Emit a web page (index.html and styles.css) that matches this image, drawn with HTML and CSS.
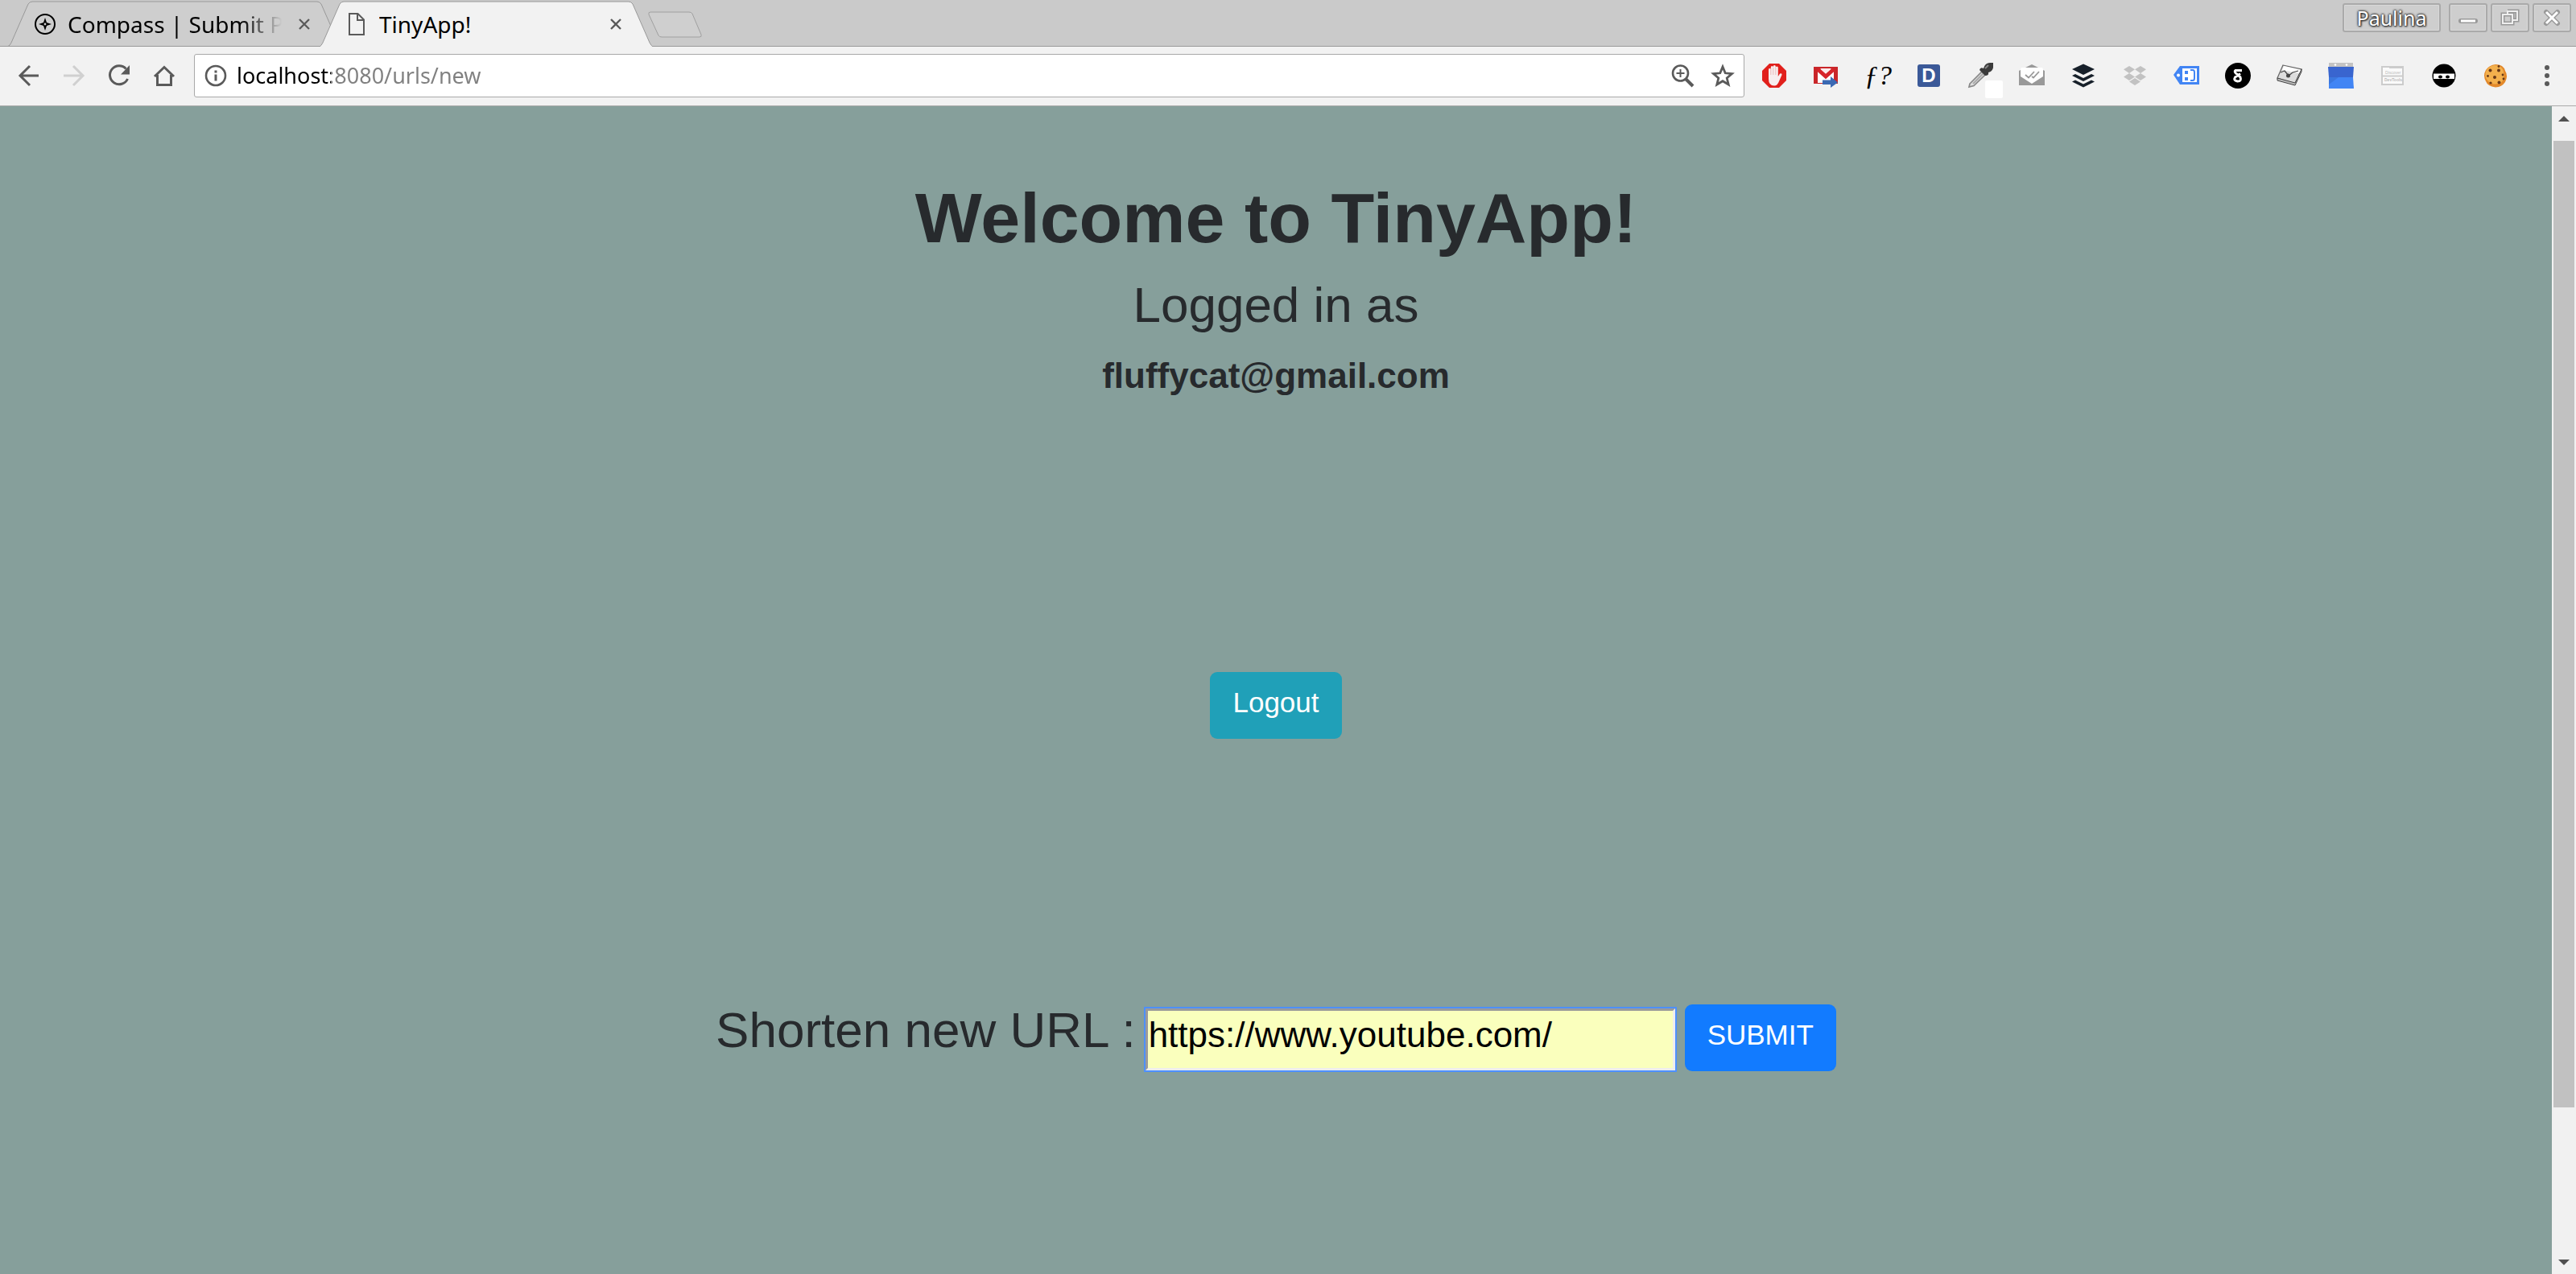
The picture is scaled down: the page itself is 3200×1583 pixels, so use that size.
FILE: index.html
```
<!DOCTYPE html>
<html lang="en">
<head>
<meta charset="utf-8">
<meta name="viewport" content="width=device-width, initial-scale=1">
<title>TinyApp!</title>
<link rel="stylesheet" href="styles.css">
</head>
<body>
<header class="tab-strip">
  <div class="tabs">
    <div class="tab">
      <svg class="tab-shape" viewBox="0 0 414 58" aria-hidden="true"><path d="M0 57.5Q2 57 4 53L25 5Q27 2 30 2H384Q387 2 389 5L410 53Q412 57 414 57.5Z" fill="#cecece" stroke="#999"/></svg>
      <svg class="favicon" viewBox="0 0 26 26" aria-hidden="true"><circle cx="13" cy="13" r="12" fill="none" stroke="#000" stroke-width="2"/><path d="M13 5L15 11L21 13L15 15L13 21L11 15L5 13L11 11Z"/><circle cx="13" cy="13" r="1.4" fill="#ccc"/></svg>
      <span class="tab-title fading">Compass | Submit Project</span>
      <button class="tab-close" aria-label="Close Compass tab"><svg viewBox="0 0 14 14"><path d="M1 1L13 13M13 1L1 13" stroke="#5a5a5a" stroke-width="2.3"/></svg></button>
    </div>
    <div class="tab active">
      <svg class="tab-shape" viewBox="0 0 414 58" aria-hidden="true"><path d="M0 58Q2 57 4 53L25 5Q27 2 30 2H384Q387 2 389 5L410 53Q412 57 414 58" fill="#f2f2f2" stroke="#999"/></svg>
      <svg class="favicon" viewBox="0 0 26 28" aria-hidden="true"><path d="M4 1H14.500L22 8.500V27H4ZM14 1V9H22" fill="none" stroke="#5a5a5a" stroke-width="2"/></svg>
      <span class="tab-title">TinyApp!</span>
      <button class="tab-close" aria-label="Close TinyApp tab"><svg viewBox="0 0 14 14"><path d="M1 1L13 13M13 1L1 13" stroke="#5a5a5a" stroke-width="2.3"/></svg></button>
    </div>
    <button class="new-tab" aria-label="New tab"><svg viewBox="0 0 68 34"><path d="M3 1H51Q54 1 55 3L66 29Q67 32 64 32H17Q14 32 13 30L1 4Q0 1 3 1Z" fill="#cfcfcf" stroke="#a0a0a0"/></svg></button>
  </div>
  <div class="window-controls">
    <button class="win-btn profile">Paulina</button>
    <button class="win-btn" aria-label="Minimize"><svg viewBox="0 0 26 26"><path d="M4 17H22" stroke="#999" stroke-width="6" stroke-linecap="round"/><path d="M4 17H22" stroke="#fff" stroke-width="3"/></svg></button>
    <button class="win-btn" aria-label="Restore"><svg viewBox="0 0 26 26" fill="none"><g stroke="#999" stroke-width="5"><path d="M10 5H22V16H18M4 9H16V20H4Z"/></g><g stroke="#eee" stroke-width="2"><path d="M10 9V5H22V16H17M4 9H16V20H4Z"/></g></svg></button>
    <button class="win-btn" aria-label="Close window"><svg viewBox="0 0 26 26"><path d="M6 6L20 20M20 6L6 20" stroke="#999" stroke-width="6" stroke-linecap="round"/><path d="M6 6L20 20M20 6L6 20" stroke="#fff" stroke-width="3"/></svg></button>
  </div>
</header>

<nav class="toolbar" aria-label="Browser toolbar">
  <div class="nav-buttons">
    <button class="icon-btn" aria-label="Back"><svg viewBox="0 0 32 32"><path d="M28 16H5M17 4L5 16L17 28" fill="none" stroke="#5a5a5a" stroke-width="3"/></svg></button>
    <button class="icon-btn" aria-label="Forward" disabled><svg viewBox="0 0 32 32"><path d="M3 16H27M15 4L27 16L15 28" fill="none" stroke="#d0d0d0" stroke-width="3"/></svg></button>
    <button class="icon-btn" aria-label="Reload"><svg viewBox="0 0 32 32"><path d="M24.500 7.500A11.500 11.500 0 1 0 26.500 20" fill="none" stroke="#5a5a5a" stroke-width="3"/><path d="M29 3V14.500H18Z" fill="#5a5a5a"/></svg></button>
    <button class="icon-btn" aria-label="Home"><svg viewBox="0 0 32 32"><path d="M4 17L16 5.500L28 17M7.500 15V27.500H24.500V15" fill="none" stroke="#5a5a5a" stroke-width="3"/></svg></button>
  </div>
  <div class="omnibox">
    <button class="icon-btn" aria-label="Site information"><svg viewBox="0 0 32 32"><circle cx="16" cy="16" r="12" fill="none" stroke="#5a5a5a" stroke-width="2.600"/><path d="M16 9.500V12.500M16 14.500V22.500" stroke="#5a5a5a" stroke-width="3"/></svg></button>
    <input class="address" type="text" aria-label="Address" value="localhost:8080/urls/new">
    <button class="icon-btn" aria-label="Zoom"><svg viewBox="0 0 32 32"><path d="M20 20L29 29" stroke="#5a5a5a" stroke-width="4"/><circle cx="13.500" cy="13" r="9.500" fill="none" stroke="#5a5a5a" stroke-width="2.600"/><path d="M13.500 8V18M8.500 13H18.500" stroke="#5a5a5a" stroke-width="2"/></svg></button>
    <button class="icon-btn" aria-label="Bookmark"><svg viewBox="0 0 32 32"><path d="M16 5L19.200 12.800L27.500 13.500L21.200 19L23.200 27L16 22.700L8.800 27L10.800 19L4.500 13.500L12.800 12.800Z" fill="none" stroke="#5a5a5a" stroke-width="2.800"/></svg></button>
  </div>
  <div class="extensions">
    <button class="icon-btn" aria-label="Ad blocker"><svg viewBox="0 0 32 32"><path d="M10 1H22L31 10V22L22 31H10L1 22V10Z" fill="#e1201c"/><path d="M9 17V8.500a1.300 1.300 0 0 1 2.800 0V5.500a1.500 1.500 0 0 1 3 0V4.500a1.500 1.500 0 0 1 3 0V6a1.500 1.500 0 0 1 3 0V17L23 13.500Q26 12.500 25.500 15L22 23Q20 28.500 16 28.500Q9 28.500 9 20Z" fill="#f7eeee"/><path d="M11.800 7V15M14.800 6V15M17.800 6V15" stroke="#e8a8a6" stroke-width=".7"/></svg></button>
    <button class="icon-btn" aria-label="Send by Gmail"><svg viewBox="0 0 32 32"><path d="M1 5H31V26H1Z" fill="#c9262a"/><path d="M6 8H26V25H6Z" fill="#fff"/><path d="M6 8L16 17L26 8" fill="none" stroke="#d6242a" stroke-width="5"/><path d="M9 7H23L16 13Z" fill="#fbeaea"/><path d="M12 21.500H22V17L31 24.500L22 31V27H12Z" fill="#3b69b3"/></svg></button>
    <button class="icon-btn font-finder" aria-label="Font finder">ƒ?</button>
    <button class="icon-btn" aria-label="Disconnect"><span class="letter-badge">D</span></button>
    <button class="icon-btn" aria-label="Color picker"><svg viewBox="0 0 32 32"><path d="M3 26L18 11L22 15L8 28.500L2 30Z" fill="#ddd" stroke="#888" stroke-width="1.700"/><path d="M7 26L20 13" stroke="#aaa" stroke-width="2"/><path d="M15 9Q16 5 20 7Q22 0 28 0H32V6Q31 11 26 12Q27 16 22 16Z" fill="#3b3b3b"/><path d="M22 7L26 3" stroke="#888" stroke-width="2"/></svg><span class="swatch"></span></button>
    <button class="icon-btn" aria-label="Mail tracker"><svg viewBox="0 0 32 32"><path d="M0 10L16 2L32 10V28H0Z" fill="#999"/><path d="M2 8Q2 6 4 6H28Q30 6 30 8V17L16 26L2 17Z" fill="#fff"/><path d="M8 15L12 18.500L19 11M16 17L18 18.500L25 11" fill="none" stroke="#999" stroke-width="1.800"/></svg></button>
    <button class="icon-btn" aria-label="Buffer"><svg viewBox="0 0 32 32" fill="#17202a"><path d="M16 1.500L30 8L16 15L2 8Z"/><path d="M2 16L6 14L16 19L26 14L30 16L16 23Z"/><path d="M2 23.500L6 21.500L16 26.500L26 21.500L30 23.500L16 30.500Z"/></svg></button>
    <button class="icon-btn" aria-label="Dropbox"><svg viewBox="0 0 32 32" fill="#c2c2c2"><path d="M9 4L16 8.300L9 13L2 8.300ZM23 4L30 8.300L23 13L16 8.300ZM9 13L16 17.500L9 22L2 17.500ZM23 13L30 17.500L23 22L16 17.500ZM16 19L23 23.500L16 28L9 23.500Z"/></svg></button>
    <button class="icon-btn" aria-label="Price tag"><svg viewBox="0 0 32 32"><path d="M0 15L8 4H32V27H8Z" fill="#4285f4"/><path d="M11 7H29V24H11Z" fill="#fff"/><circle cx="6" cy="15.500" r="2" fill="#fff"/><path d="M14 10H18V14H14ZM14 18H18V22H14Z" fill="#4285f4"/><path d="M21 9H24Q26 9 26 12V19Q26 22 24 22H21" fill="none" stroke="#4285f4" stroke-width="2"/></svg></button>
    <button class="icon-btn" aria-label="Scribe"><svg viewBox="0 0 32 32"><circle cx="16" cy="16" r="16"/><path d="M21 9.500H13Q11 11 14 13.500L19 18Q21 23 15.500 23Q10 22 12.500 18L19 13.500" fill="none" stroke="#fff" stroke-width="3"/></svg></button>
    <button class="icon-btn" aria-label="Checker Plus"><svg viewBox="0 0 32 32"><path d="M8 3L31 8L23 26L1 19Z" fill="#ddd" stroke="#666" stroke-width="1.200"/><path d="M1 19L23 25L31 8V11L23 28L1 22Z" fill="#bbb" stroke="#444" stroke-width="1"/><path d="M9 4L30 9L28 13L7 9Z" fill="#fff"/><path d="M5 12L10 10L15 16L20 12L27 10" fill="none" stroke="#444" stroke-width="1.300"/><circle cx="14.500" cy="16" r="2.500" fill="#444"/></svg></button>
    <button class="icon-btn" aria-label="Calendar"><svg viewBox="0 0 32 32"><path d="M1 0H31V6H1Z" fill="#c3c3c3"/><path d="M0 5H32L31 18H1Z" fill="#3965cf"/><path d="M1 18H31L32 32H1Z" fill="#4285f4"/><path d="M1 18H13L1 27Z" fill="#3b77de"/><circle cx="9" cy="2.500" r="1.300" fill="#fff"/><circle cx="23" cy="2.500" r="1.300" fill="#fff"/></svg></button>
    <button class="icon-btn" aria-label="Discover DevTools"><svg viewBox="0 0 32 32"><path d="M3 5H29V27H3Z" fill="#fafafa" stroke="#ccc" stroke-width="2"/><path d="M3 16.500H29M12 6H28" stroke="#ccc" stroke-width="2"/><text class="mini-text" x="7" y="14">Discover</text><text class="mini-text bold" x="6" y="23">DevTools</text></svg></button>
    <button class="icon-btn" aria-label="Ninja"><svg viewBox="0 0 32 32"><circle cx="16" cy="16" r="14.500"/><path d="M3 13.500H29V20H3Z" fill="#fff"/><ellipse cx="11.500" cy="17.500" rx="2.500" ry="2"/><ellipse cx="20.500" cy="17.500" rx="2.500" ry="2"/></svg></button>
    <button class="icon-btn" aria-label="Edit cookie"><svg viewBox="0 0 32 32"><path d="M16 2Q26 2 28 10Q32 16 28 24Q24 30 16 30.500Q6 29 4 23Q0 16 4 9Q8 3 16 2Z" fill="#e3892b"/><path d="M15 3Q24 3 26 11Q28 19 23 25Q12 29 6 22Q1 16 5 9Q8 4 15 3Z" fill="#f3b04d"/><g fill="#663718"><circle cx="9.500" cy="9.500" r="2"/><circle cx="20" cy="9.500" r="2"/><circle cx="15" cy="18" r="2"/><circle cx="6.500" cy="16.500" r="1.400"/><circle cx="25" cy="15" r="1.400"/><circle cx="20.500" cy="24.500" r="2"/><circle cx="10" cy="25" r="1.600"/><circle cx="26" cy="20" r="1.400"/><circle cx="20" cy="4.500" r="1.400"/></g></svg></button>
    <button class="icon-btn" aria-label="Menu"><svg viewBox="0 0 32 32" fill="#5a5a5a"><circle cx="16" cy="6" r="3"/><circle cx="16" cy="16" r="3"/><circle cx="16" cy="26" r="3"/></svg></button>
  </div>
</nav>

<div class="viewport">
  <main class="page">
    <h1 class="title">Welcome to TinyApp!</h1>
    <h3 class="subtitle">Logged in as</h3>
    <p class="email">fluffycat@gmail.com</p>
    <form class="logout-form" onsubmit="return false">
      <button class="btn btn-info">Logout</button>
    </form>
    <form class="url-form" onsubmit="return false">
      <label class="url-label" for="long-url">Shorten new URL :</label>
      <input class="url-input" id="long-url" type="text" value="https://www.youtube.com/">
      <button class="btn btn-primary">SUBMIT</button>
    </form>
  </main>
  <div class="scrollbar" aria-hidden="true">
    <div class="arrow up"></div>
    <div class="track"><div class="thumb"></div></div>
    <div class="arrow down"></div>
  </div>
</div>
</body>
</html>
```
FILE: styles.css
```
* { box-sizing: border-box; }

body {
  margin: 0;
  min-height: 100vh;
  display: flex;
  flex-direction: column;
  font-family: "Liberation Sans", Arial, sans-serif;
  background: #f2f2f2;
}

button {
  font: inherit;
  border: 0;
  padding: 0;
  background: none;
}

svg { display: block; }

/* Tab strip */
.tab-strip {
  display: flex;
  justify-content: space-between;
  height: 58px;
  padding: 0 6px 0 10px;
  background: #cacaca;
  border-bottom: 1px solid #999;
  font-family: "Noto Sans", sans-serif;
}

.tabs { display: flex; }

.tab {
  position: relative;
  display: flex;
  align-items: center;
  width: 414px;
  height: 58px;
  padding: 2px 39px 0 33px;
}

.tab + .tab { margin-left: -27px; }
.tab.active { z-index: 1; }

.tab-shape {
  position: absolute;
  inset: 0;
  width: 414px;
  height: 58px;
}

.favicon {
  position: relative;
  flex: none;
  width: 26px;
  height: 28px;
}

.tab-title {
  position: relative;
  flex: 1;
  margin-left: 15px;
  overflow: hidden;
  white-space: nowrap;
  font-size: 28px;
  line-height: 40px;
}

.tab-title.fading {
  mask-image: linear-gradient(90deg, #000 80%, transparent 99%);
}

.tab-close {
  position: relative;
  width: 14px;
  margin-left: 18px;
}

.new-tab {
  width: 68px;
  height: 34px;
  margin: 14px 0 0 -6px;
}

.window-controls {
  display: flex;
  gap: 4px;
  padding-top: 4px;
}

.win-btn {
  display: grid;
  place-items: center;
  width: 48px;
  height: 36px;
  border: 2px solid #aaa;
  border-radius: 3px;
  background: #cecece;
  box-shadow: inset 0 0 0 1px #d8d8d8;
}

.win-btn svg { width: 26px; height: 26px; }

.win-btn.profile {
  width: 122px;
  margin-right: 6px;
  color: #fff;
  font-size: 25px;
  line-height: 32px;
  text-shadow: 0 0 2px #333, 0 0 3px #333, 0 0 3px #333, 1px 1px 2px #333;
}

/* Toolbar */
.toolbar {
  display: flex;
  align-items: center;
  height: 74px;
  padding: 0 20px 2px;
  background: #f2f2f2;
  border-bottom: 1px solid #aaa;
}

.icon-btn {
  position: relative;
  flex: none;
  width: 32px;
  height: 32px;
}

.icon-btn > svg { width: 32px; height: 32px; }

.nav-buttons {
  display: flex;
  gap: 24px;
}

.omnibox {
  flex: 1;
  display: flex;
  align-items: center;
  gap: 18px;
  height: 54px;
  margin: 0 21px;
  padding: 0 10px;
  background: #fff;
  border: 1px solid #a9a9a9;
  border-radius: 3px;
}

.address {
  flex: 1;
  min-width: 0;
  margin-left: -8px;
  padding: 0;
  border: 0;
  outline: 0;
  font-family: "Noto Sans", sans-serif;
  font-size: 27px;
  line-height: 40px;
  color: transparent;
  background: linear-gradient(90deg, #000 117px, #808080 117px);
  background-clip: text;
}

.extensions {
  display: flex;
  gap: 32px;
}

.font-finder {
  font: italic 400 34px/32px "Liberation Serif", serif;
  white-space: nowrap;
}

.letter-badge {
  display: block;
  width: 28px;
  margin: 0 auto;
  border-radius: 3px;
  background: #3b5998;
  color: #fff;
  font-weight: 700;
  font-size: 24px;
  line-height: 28px;
}

.swatch {
  position: absolute;
  left: 22px;
  top: 22px;
  width: 22px;
  height: 22px;
  border-radius: 2px;
  background: #fff;
}

.mini-text {
  font: 5px "Liberation Sans", sans-serif;
  fill: #bbb;
}

.mini-text.bold { font-weight: 700; }

/* Page */
.viewport {
  flex: 1;
  display: flex;
}

.page {
  flex: 1;
  padding-top: 86px;
  background: #869f9b;
  color: #272a2d;
  text-align: center;
}

.title {
  margin: 0 0 18px;
  font-size: 88px;
  line-height: 106px;
}

.subtitle {
  margin: 0 0 18px;
  font-size: 62px;
  font-weight: 400;
  line-height: 74px;
}

.email {
  margin: 0;
  font-size: 44px;
  font-weight: 700;
  line-height: 66px;
}

.logout-form { margin-top: 335px; }

.btn {
  padding: 11px 28px 19px;
  border-radius: 9px;
  color: #fff;
  font-size: 35px;
  line-height: 53px;
}

.btn-info { background: #20a0b8; }
.btn-primary { background: #127bff; }

.url-form {
  display: flex;
  justify-content: center;
  align-items: flex-start;
  gap: 12px;
  margin-top: 330px;
}

.url-label {
  font-size: 62px;
  line-height: 64px;
}

.url-input {
  width: 658px;
  height: 77px;
  margin-top: 5px;
  padding: 4px 1px 16px;
  border: 3px inset #eee;
  outline: 2px solid #4d90fe;
  background: #faffbd;
  color: #000;
  font: 44px "Liberation Sans", Arial, sans-serif;
}

/* Scrollbar */
.scrollbar {
  display: flex;
  flex-direction: column;
  width: 30px;
  background: #f1f1f1;
}

.track {
  flex: 1;
  padding: 0 2px;
}

.thumb {
  height: 88%;
  background: #c1c1c1;
}

.arrow {
  display: flex;
  justify-content: center;
  height: 43px;
  padding-top: 12px;
}

.arrow::before {
  content: "";
  width: 14px;
  height: 7px;
  background: #505050;
}

.arrow.up::before { clip-path: polygon(50% 0, 100% 100%, 0 100%); }
.arrow.down::before { clip-path: polygon(0 0, 100% 0, 50% 100%); }
.arrow.down { padding-top: 25px; }
```
